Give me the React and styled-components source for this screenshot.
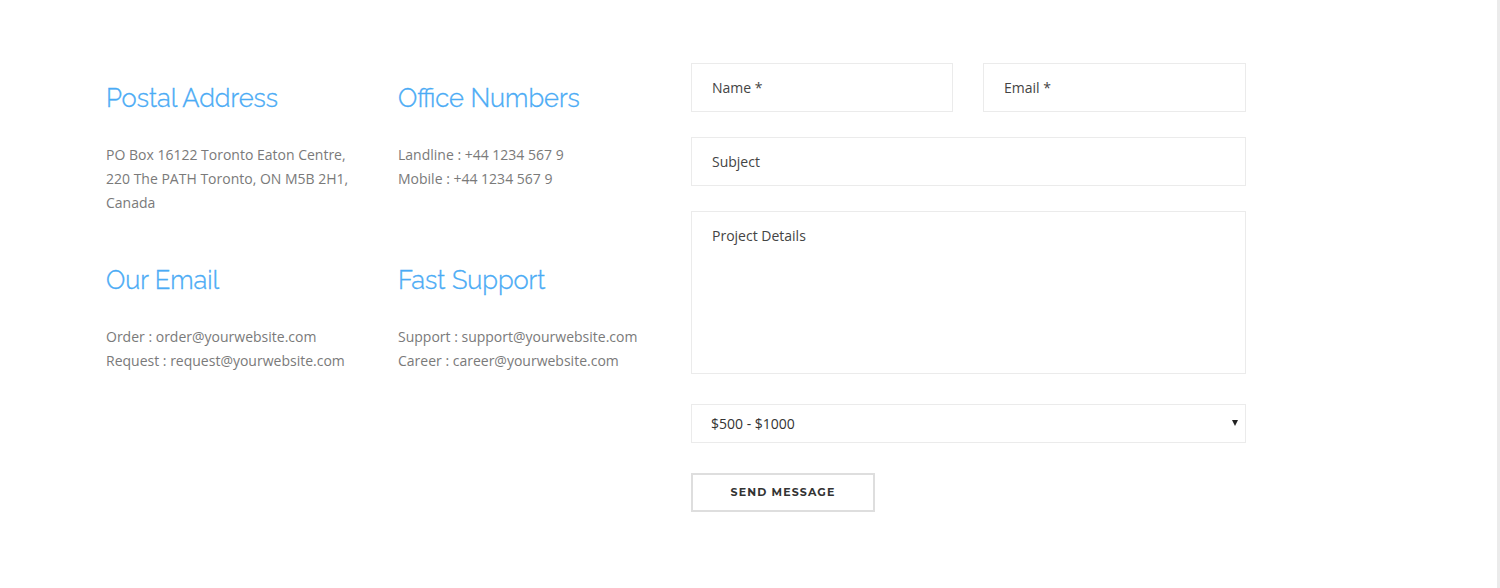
import React from "react";
import styled, { createGlobalStyle } from "styled-components";

const Global = createGlobalStyle`
  html, body { margin: 0; padding: 0; background: #fff; }
  body { font-family: "Open Sans", "Liberation Sans", sans-serif; }
  * { box-sizing: border-box; }
`;

const Page = styled.div`
  min-height: 588px;
  display: flex;
  align-items: flex-start;
  padding: 63px 0 0 106px;
  border-right: 3px solid #ebebeb;
  width: 1500px;
`;

const InfoGrid = styled.div`
  display: grid;
  grid-template-columns: 292px 293px;
  padding-top: 20px;
`;

const Block = styled.div`
  padding-bottom: 50px;
`;

const Heading = styled.h3`
  margin: 0 0 29px;
  font-family: "Raleway", "Open Sans", sans-serif;
  font-weight: 300;
  font-size: 25.5px;
  line-height: 31px;
  color: #4aabf5;
  -webkit-text-stroke: 0.35px #4aabf5;
`;

const Text = styled.p`
  margin: 0;
  font-size: 14px;
  line-height: 24px;
  color: #7a7a7a;
`;

const Form = styled.form`
  width: 555px;
  display: flex;
  flex-direction: column;
`;

const Row = styled.div`
  display: grid;
  grid-template-columns: ${(p) => (p.$split ? "262px 1fr" : "1fr")};
  column-gap: 30px;
  margin-bottom: ${(p) => p.$mb || 25}px;
`;

const fieldBase = `
  width: 100%;
  border: 1px solid #ebebeb;
  background: #fff;
  font-family: "Open Sans", "Liberation Sans", sans-serif;
  font-size: 14px;
  color: #444;
  padding: 0 20px;
  outline: none;
  border-radius: 0;
  &::placeholder { color: #444; opacity: 1; }
`;

const Input = styled.input`
  ${fieldBase}
  height: 49px;
`;

const TextArea = styled.textarea`
  ${fieldBase}
  height: 163px;
  padding-top: 14px;
  resize: none;
  line-height: 20px;
  display: block;
`;

const SelectWrap = styled.div`
  position: relative;
  &::after {
    content: "";
    position: absolute;
    right: 8px;
    top: 16px;
    border-left: 3.5px solid transparent;
    border-right: 3.5px solid transparent;
    border-top: 6px solid #222;
    pointer-events: none;
  }
`;

const Select = styled.select`
  ${fieldBase}
  height: 39px;
  padding: 0 19px;
  appearance: none;
  -webkit-appearance: none;
  color: #333;
  display: block;
`;

const Button = styled.button`
  width: 184px;
  height: 39px;
  border: 2px solid #dedede;
  background: #fff;
  font-family: "Montserrat", "Open Sans", sans-serif;
  font-weight: 700;
  font-size: 11px;
  line-height: 1;
  letter-spacing: 1.1px;
  color: #333;
  text-transform: uppercase;
  cursor: pointer;
  padding: 0 0 1px;
`;

const blocks = [
  { title: "Postal Address", lines: ["PO Box 16122 Toronto Eaton Centre,", "220 The PATH Toronto, ON M5B 2H1,", "Canada"] },
  { title: "Office Numbers", lines: ["Landline : +44 1234 567 9", "Mobile : +44 1234 567 9"] },
  { title: "Our Email", lines: ["Order : order@yourwebsite.com", "Request : request@yourwebsite.com"] },
  { title: "Fast Support", lines: ["Support : support@yourwebsite.com", "Career : career@yourwebsite.com"] },
];

export default function App() {
  return (
    <>
      <Global />
      <Page>
        <InfoGrid>
          {blocks.map((b) => (
            <Block key={b.title}>
              <Heading>{b.title}</Heading>
              <Text>
                {b.lines.map((l, i) => (
                  <React.Fragment key={i}>
                    {l}
                    {i < b.lines.length - 1 && <br />}
                  </React.Fragment>
                ))}
              </Text>
            </Block>
          ))}
        </InfoGrid>
        <Form onSubmit={(e) => e.preventDefault()}>
          <Row $split>
            <Input placeholder="Name *" />
            <Input placeholder="Email *" />
          </Row>
          <Row>
            <Input placeholder="Subject" />
          </Row>
          <Row $mb={30}>
            <TextArea placeholder="Project Details" />
          </Row>
          <Row $mb={30}>
            <SelectWrap>
              <Select defaultValue="500">
                <option value="500">$500 - $1000</option>
                <option value="1000">$1000 - $2000</option>
              </Select>
            </SelectWrap>
          </Row>
          <div>
            <Button type="submit">Send Message</Button>
          </div>
        </Form>
      </Page>
    </>
  );
}
